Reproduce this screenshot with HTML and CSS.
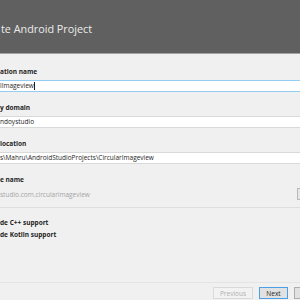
FILE: index.html
```html
<!DOCTYPE html>
<html lang="en">
<head>
    <meta charset="UTF-8">
    <title>Create Android Project</title>
    <link rel="stylesheet" href="styles.css">
</head>
<body>
    <div class="window">
        <header class="banner">
            <h1>te Android Project</h1>
        </header>
        <main class="form">
            <div class="field">
                <label>ation name</label>
                <div class="input focused">lImageview<span class="caret"></span></div>
            </div>
            <div class="field">
                <label>y domain</label>
                <div class="input">ndoystudio</div>
            </div>
            <div class="field">
                <label>location</label>
                <div class="input">s\Mahru\AndroidStudioProjects\CircularImageview</div>
            </div>
            <div class="field last">
                <label>e name</label>
                <div class="package">
                    <span>studio.com.circularimageview</span>
                    <button class="edit" title="Edit"></button>
                </div>
            </div>
            <div class="options">
                <div class="option">de C++ support</div>
                <div class="option">de Kotlin support</div>
            </div>
        </main>
        <footer class="buttons">
            <button class="btn" disabled>Previous</button>
            <button class="btn default">Next</button>
            <button class="btn cancel" title="Cancel"></button>
        </footer>
    </div>
</body>
</html>
```

FILE: styles.css
```css
* {
    box-sizing: border-box;
}
body {
    margin: 0;
    font-family: 'Open Sans', 'Noto Sans', sans-serif;
    background-color: #f0f0f0;
    color: #1e1e1e;
}
.window {
    width: 300px;
    height: 300px;
    overflow: hidden;
    display: flex;
    flex-direction: column;
}
.banner {
    height: 54px;
    background-color: #606060;
    border-bottom: 1px solid #a3a3a3;
    display: flex;
    align-items: center;
    padding-left: 1px;
}
.banner h1 {
    margin: 3px 0 0 0;
    font-weight: 400;
    font-size: 10.8px;
    color: #ececec;
}
.form {
    flex: 1;
    padding-top: 13px;
}
.field {
    margin-bottom: 11px;
}
.field.last {
    margin-bottom: 0;
}
.field label {
    display: block;
    font-size: 6.5px;
    font-weight: 700;
    line-height: 9px;
    height: 9px;
    margin-bottom: 4px;
}
.field.last label {
    margin-top: 3px;
    margin-bottom: 4px;
}
.input {
    width: 310px;
    height: 12px;
    background-color: #ffffff;
    border-top: 1px solid #d9d9d9;
    border-bottom: 1px solid #d9d9d9;
    font-size: 6.5px;
    line-height: 10px;
    white-space: nowrap;
    display: flex;
    align-items: center;
}
.input.focused {
    border-color: #94ccf2;
}
.caret {
    width: 1px;
    height: 8px;
    background-color: #1e1e1e;
}
.package {
    height: 12px;
    display: flex;
    align-items: center;
    justify-content: space-between;
    font-size: 6.5px;
    color: #a4a4a4;
}
.edit {
    width: 20px;
    height: 12px;
    margin-right: -17px;
    background-color: #e6e6e6;
    border: 1px solid #b9b9b9;
}
.options {
    border-top: 1px solid #dedede;
    margin-top: 7px;
    padding-top: 9px;
}
.option {
    font-size: 6.5px;
    font-weight: 700;
    line-height: 12px;
}
.buttons {
    height: 18px;
    border-top: 1px solid #e4e4e4;
    display: flex;
    gap: 6px;
    padding: 4px 0 0 213px;
    overflow: hidden;
}
.btn {
    flex-shrink: 0;
    width: 40px;
    height: 12px;
    padding: 0;
    font-family: 'Open Sans', 'Noto Sans', sans-serif;
    font-size: 6.5px;
    background-color: #e1e1e1;
    border: 1px solid #adadad;
    color: #1e1e1e;
}
.btn:disabled {
    background-color: #f2f2f2;
    border-color: #dadada;
    color: #b0b0b0;
}
.btn.default {
    width: 29px;
    border-color: #4aa0e6;
}
```
